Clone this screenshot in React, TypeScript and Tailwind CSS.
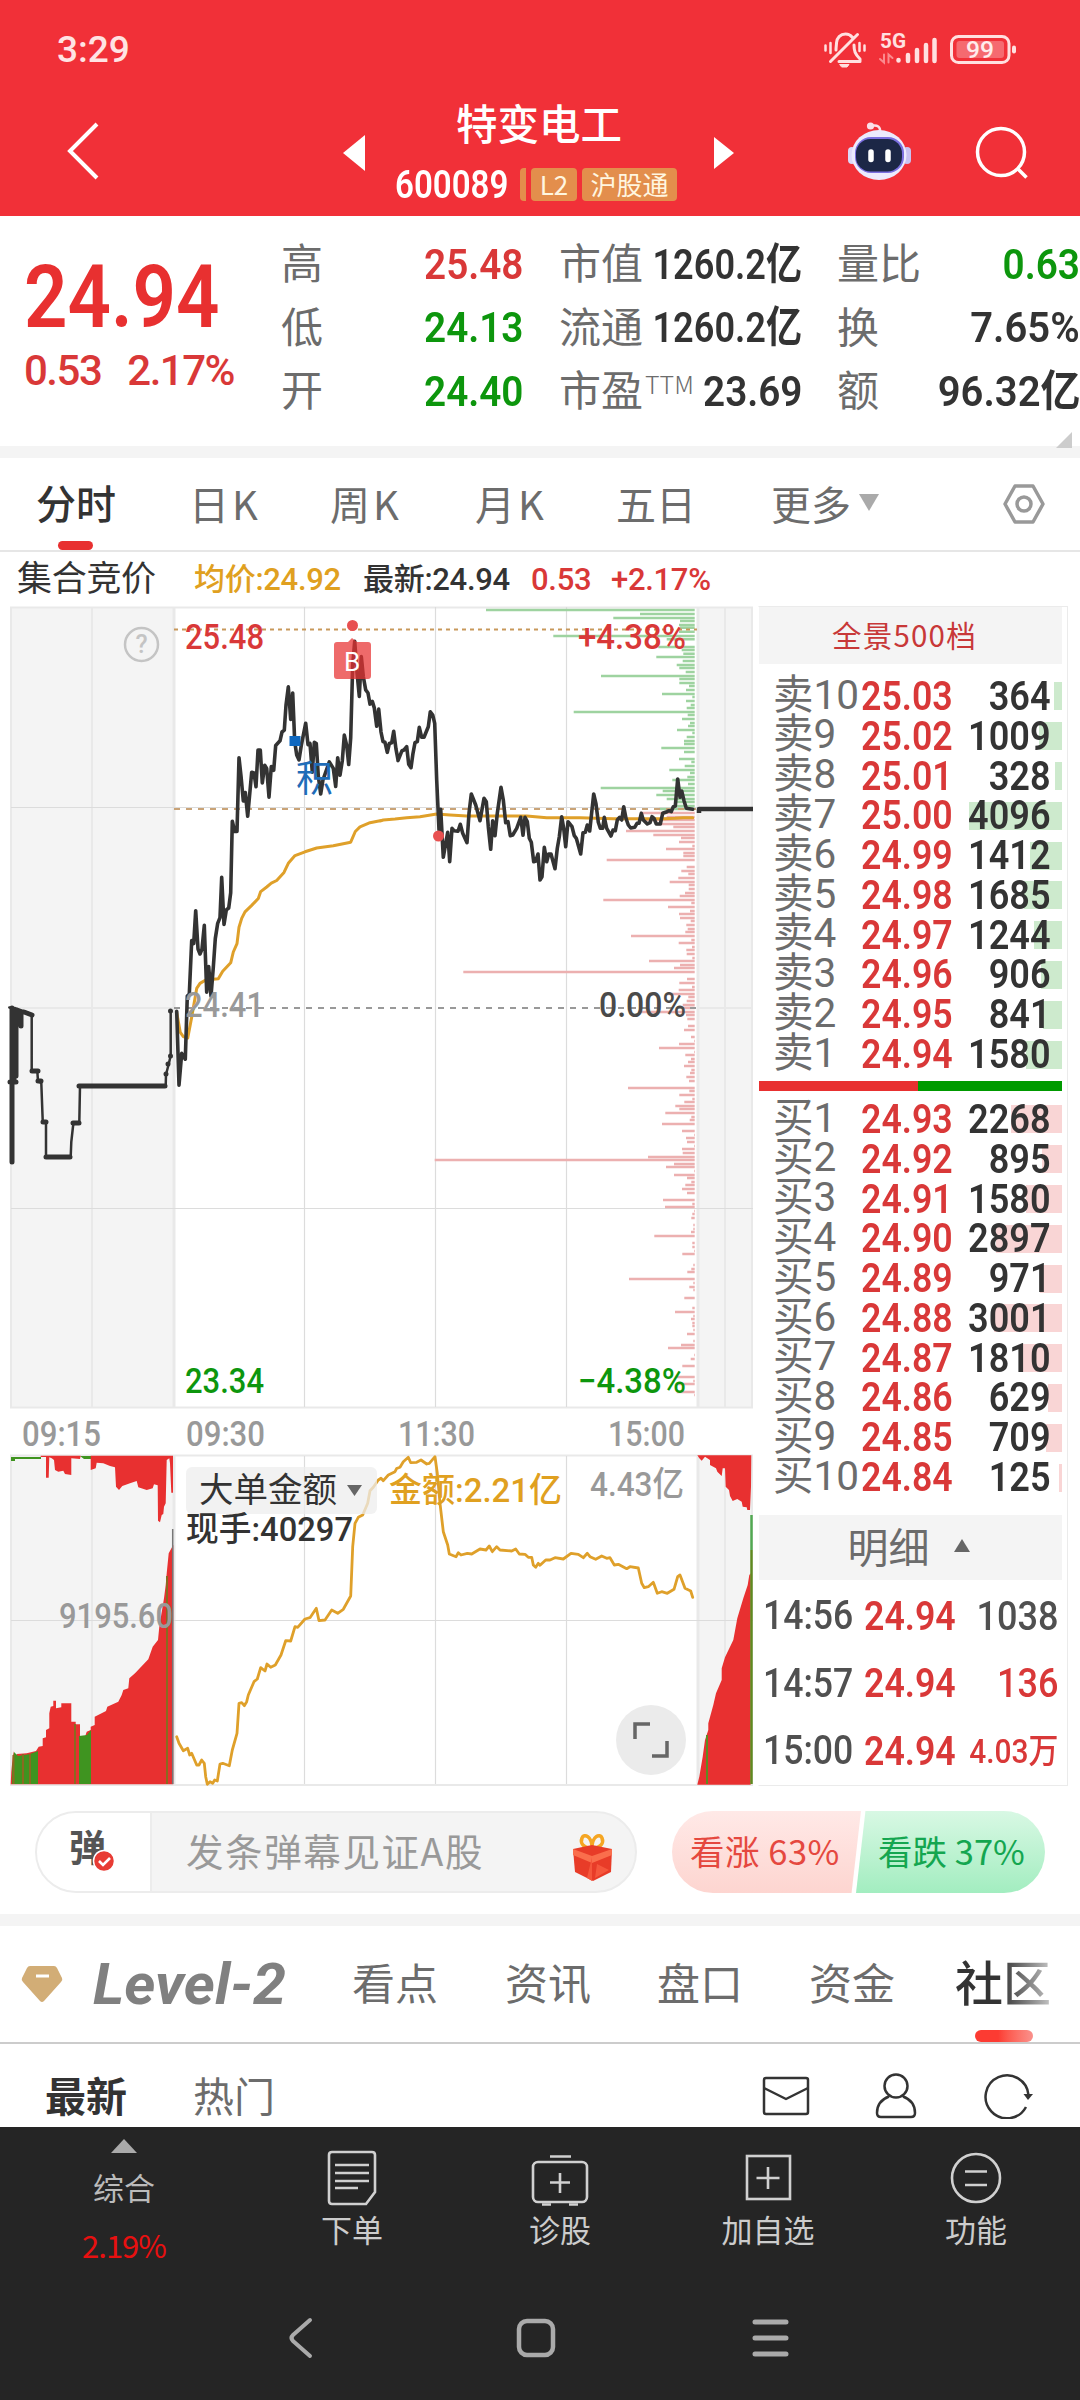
import type { ReactNode } from 'react'

type Point = [number, number]

const NUM = "font-['Roboto','Noto_Sans_CJK_SC',sans-serif]"

// sampled traces, mapped to chart space by `trace`
function trace(points: Point[], x0: number, y0: number, sx: number, sy: number) {
  return points.map(([x, y]) => `${(x0 + x * sx).toFixed(1)},${(y0 + y * sy).toFixed(1)}`).join(' ')
}

const T = 1 / 3
const V = 600 / 1568

const priceMorning: Point[] = [
  [530, 1075], [537, 1268], [545, 1185], [556, 1200], [562, 1035], [568, 1030], [575, 890], [581, 898], [587, 812],
  [594, 912], [600, 925], [606, 912], [613, 850], [620, 1025], [626, 958], [633, 1035], [640, 960], [646, 885],
  [653, 845], [660, 830], [665, 725], [672, 848], [679, 810], [686, 805], [692, 765], [697, 578], [704, 605],
  [711, 605], [717, 412], [723, 460], [730, 525], [736, 503], [743, 565], [755, 450], [762, 452], [768, 488],
  [774, 392], [781, 392], [787, 478], [794, 432], [800, 440], [807, 515], [814, 435], [821, 445], [827, 380],
  [840, 368], [846, 345], [853, 340], [858, 275], [865, 227], [872, 312], [878, 243], [884, 370], [890, 405],
  [897, 418], [904, 380], [917, 322], [924, 378], [930, 375], [937, 450], [943, 372], [949, 375], [955, 460],
  [962, 507], [969, 470], [988, 423], [1000, 440], [1007, 487], [1013, 412], [1020, 458], [1027, 420], [1033, 353],
  [1040, 380], [1046, 430], [1052, 360], [1058, 170], [1064, 108], [1071, 190], [1078, 252], [1084, 148],
  [1090, 200], [1097, 235], [1104, 243], [1110, 272], [1117, 265], [1123, 282], [1130, 330], [1136, 285],
  [1143, 345], [1149, 370], [1155, 372], [1162, 398], [1168, 375], [1175, 373], [1181, 343], [1188, 390], [1194, 418],
]

const priceAfternoon: Point[] = [
  [54, 482], [66, 452], [72, 450], [80, 440], [86, 493], [93, 503], [99, 460], [105, 428], [112, 425], [118, 382],
  [125, 412], [132, 412], [145, 380], [151, 335], [158, 345], [164, 370], [170, 540], [177, 690], [182, 628],
  [190, 772], [203, 697], [209, 785], [216, 685], [222, 692], [234, 694], [241, 673], [248, 700], [261, 728],
  [267, 640], [274, 582], [287, 615], [300, 662], [312, 595], [319, 605], [325, 680], [332, 748], [338, 662],
  [345, 707], [352, 640], [363, 562], [370, 600], [377, 668], [384, 665], [391, 707], [398, 705], [410, 685],
  [422, 652], [429, 706], [435, 652], [442, 665], [448, 715], [454, 727], [461, 785], [467, 783], [474, 762],
  [480, 840], [486, 830], [493, 742], [500, 785], [506, 762], [513, 762], [525, 806], [532, 745], [538, 710],
  [545, 650], [551, 685], [557, 740], [564, 665], [576, 680], [583, 707], [589, 715], [602, 762], [609, 698],
  [616, 697], [622, 675], [629, 693], [641, 582], [648, 612], [655, 667], [661, 685], [668, 685], [673, 652],
  [680, 685], [693, 708], [699, 690], [706, 692], [712, 660], [719, 652], [725, 660], [731, 620], [738, 655],
  [745, 675], [752, 684], [764, 682], [771, 670], [777, 670], [784, 640], [790, 660], [802, 672], [810, 668],
  [816, 650], [822, 655], [829, 672], [841, 672], [848, 640], [861, 635], [867, 632], [874, 635], [880, 620],
  [886, 618], [893, 537], [900, 592], [905, 573], [912, 602], [919, 625], [938, 628],
]

const averageMorning: Point[] = [
  [530, 1078], [541, 1130], [550, 1141], [563, 1145], [575, 1090], [590, 1015], [600, 1002], [617, 993], [655, 990],
  [668, 970], [692, 948], [700, 920], [711, 898], [717, 855], [725, 832], [735, 815], [755, 798], [775, 780],
  [782, 762], [800, 750], [814, 740], [830, 733], [852, 712], [865, 688], [885, 668], [915, 658], [950, 648],
  [1000, 642], [1052, 633], [1066, 605], [1080, 593], [1110, 582], [1140, 577],
]

const averageAfternoon: Point[] = [
  [0, 663], [10, 660], [45, 657], [80, 653], [120, 650], [170, 642], [210, 645], [260, 648], [440, 648], [500, 653],
  [600, 653], [700, 656], [850, 656], [885, 655], [910, 653], [938, 653],
]

const auctionPrice: Point[] = [
  [28, 1065], [50, 1068], [75, 1076], [95, 1083], [95, 1230], [112, 1230], [114, 1258], [124, 1262], [128, 1360],
  [138, 1367], [138, 1455], [212, 1455], [214, 1416], [219, 1376], [221, 1366], [238, 1366], [240, 1270],
  [497, 1270], [498, 1240], [507, 1210], [512, 1190], [512, 1073],
]

const amountMorning: Point[] = [
  [530, 1070], [537, 1090], [550, 1112], [563, 1105], [569, 1125], [575, 1120], [590, 1155], [597, 1155],
  [605, 1140], [613, 1150], [617, 1190], [622, 1213], [630, 1205], [638, 1210], [644, 1200], [652, 1203],
  [660, 1152], [668, 1150], [688, 1157], [697, 1110], [711, 1060], [717, 970], [725, 968], [733, 977], [740, 965],
  [745, 945], [762, 905], [772, 897], [782, 863], [795, 873], [801, 852], [812, 862], [826, 855], [843, 825],
  [857, 782], [872, 783], [885, 740], [893, 742], [915, 717], [930, 713], [949, 685], [957, 722], [975, 720],
  [995, 690], [1013, 700], [1030, 688], [1052, 648], [1058, 500], [1065, 430], [1075, 412], [1088, 405],
  [1103, 370], [1110, 332], [1120, 322], [1135, 300], [1143, 295], [1150, 302], [1165, 285], [1185, 275], [1190, 265],
]

const amountAfternoon: Point[] = [
  [52, 145], [60, 142], [70, 125], [85, 112], [92, 128], [110, 127], [123, 120], [140, 132], [148, 130], [165, 110],
  [172, 160], [180, 250], [190, 335], [203, 375], [208, 402], [228, 410], [235, 398], [243, 405], [262, 400],
  [275, 402], [300, 387], [318, 390], [328, 378], [337, 395], [350, 380], [360, 390], [395, 393], [407, 387],
  [418, 402], [435, 403], [445, 412], [455, 412], [460, 435], [467, 442], [475, 430], [480, 436], [497, 420],
  [510, 420], [525, 413], [550, 417], [573, 400], [595, 403], [610, 413], [622, 400], [630, 410], [647, 418],
  [665, 408], [680, 415], [690, 413], [703, 435], [715, 433], [740, 446], [750, 440], [775, 444], [785, 490],
  [793, 503], [805, 500], [820, 487], [832, 520], [845, 515], [862, 520], [882, 508], [893, 470], [900, 465],
  [915, 505], [932, 513], [938, 532],
]

// [offset from chart top, bar start], bars grow leftwards from the 15:00 edge
const askDepth: Point[] = [
  [30, 318], [42, 780], [54, 700], [63, 900], [75, 897], [83, 900], [95, 897], [108, 520], [118, 860], [141, 835],
  [150, 905], [161, 910], [171, 829], [183, 908], [195, 890], [204, 898], [216, 917], [228, 663], [237, 898],
  [249, 898], [258, 927], [270, 918], [282, 846], [291, 937], [303, 918], [315, 932], [324, 920], [336, 581],
  [345, 923], [357, 906], [369, 930], [378, 924], [390, 891], [399, 937], [411, 920], [423, 912], [432, 912],
  [444, 844], [456, 912], [477, 897], [486, 934], [498, 914], [510, 868], [519, 930], [531, 922], [540, 877],
  [552, 924], [564, 662], [573, 848], [585, 829], [597, 860], [606, 890], [618, 880], [627, 838],
]

const bidDepth: Point[] = [
  [639, 780], [651, 860], [660, 790], [672, 830], [681, 880], [693, 738], [705, 820], [714, 903], [726, 897],
  [738, 937], [747, 858], [759, 910], [768, 910], [780, 680], [801, 920], [813, 904], [822, 925], [834, 895],
  [846, 869], [855, 926], [867, 926], [879, 915], [888, 899], [900, 670], [909, 934], [921, 864], [933, 930],
  [942, 897], [954, 900], [963, 932], [975, 919], [987, 923], [996, 916], [1008, 753], [1020, 934], [1029, 896],
  [1041, 936], [1050, 919], [1062, 920], [1074, 937], [1083, 807], [1095, 900], [1104, 882], [1116, 250],
  [1137, 921], [1149, 898], [1161, 936], [1170, 896], [1182, 860], [1191, 925], [1203, 920], [1215, 908],
  [1224, 905], [1236, 775], [1245, 918], [1257, 922], [1278, 924], [1290, 912], [1311, 933], [1323, 942],
  [1332, 897], [1344, 837], [1356, 942], [1365, 916], [1377, 933], [1386, 924], [1398, 912], [1410, 934],
  [1419, 930], [1431, 919], [1443, 927], [1464, 744], [1473, 928], [1485, 898], [1497, 937], [1506, 913],
  [1518, 886], [1527, 898], [1539, 856], [1551, 934], [1560, 929], [1572, 846], [1593, 906], [1605, 942],
  [1614, 918], [1626, 921], [1638, 942], [1647, 906], [1659, 908], [1671, 804], [1680, 164], [1692, 882],
  [1701, 858], [1713, 942], [1725, 882], [1734, 921], [1746, 934], [1755, 916], [1767, 906], [1779, 921],
  [1800, 849], [1812, 937], [1821, 855], [1833, 942], [1842, 937], [1854, 934], [1875, 940], [1887, 940],
  [1896, 933], [1908, 823], [1929, 937], [1941, 937], [1953, 942], [1962, 907], [1995, 940], [2007, 934],
  [2016, 922], [2037, 747], [2049, 940], [2061, 928], [2070, 940], [2094, 913], [2124, 937], [2136, 885],
  [2148, 940], [2157, 933], [2169, 937], [2178, 937], [2190, 940], [2202, 921], [2223, 940], [2235, 903],
  [2244, 864], [2265, 942], [2277, 932], [2298, 907], [2331, 890], [2343, 940], [2352, 890], [2376, 890], [2385, 942],
]

const openVolume: Point[] = [
  [32, 1213], [34, 1175], [40, 1113], [44, 1150], [50, 1122], [80, 1120], [108, 1113], [116, 1100], [128, 1098],
  [128, 1075], [138, 1072], [138, 1050], [148, 1045], [148, 1000], [152, 980], [160, 978], [160, 962], [168, 962],
  [168, 985], [184, 982], [184, 970], [214, 970], [214, 1025], [227, 1025], [227, 1033], [240, 1033], [240, 1070],
  [256, 1068], [260, 1055], [272, 1050], [272, 1040], [284, 1035], [284, 1010], [318, 993], [322, 980], [355, 965],
  [365, 945], [370, 930], [385, 925], [388, 895], [405, 880], [445, 838], [458, 800], [474, 780], [478, 740],
  [492, 655], [497, 615], [500, 580], [506, 520], [515, 503], [520, 495], [520, 1213],
]

const openUnmatched: Point[] = [
  [122, 227], [122, 231], [138, 231], [138, 293], [146, 293], [148, 232], [155, 235], [162, 240], [165, 270],
  [175, 275], [190, 272], [195, 282], [214, 285], [214, 235], [240, 237], [242, 227], [272, 227], [272, 270],
  [287, 265], [290, 248], [310, 250], [330, 258], [345, 262], [348, 320], [357, 330], [367, 318], [390, 310],
  [410, 303], [415, 322], [440, 330], [458, 325], [462, 313], [473, 316], [474, 422], [480, 427], [485, 405],
  [490, 402], [492, 380], [497, 370], [500, 240], [508, 235], [510, 250], [514, 338], [519, 338], [519, 227],
]

const closeVolume: Point[] = [
  [952, 1094], [958, 1070], [968, 1010], [975, 960], [985, 930], [985, 910], [1000, 855], [1008, 820], [1025, 780],
  [1025, 745], [1035, 712], [1060, 660], [1072, 595], [1090, 535], [1103, 495], [1108, 465], [1112, 460], [1112, 1094],
]

const closeUnmatched: Point[] = [
  [952, 106], [958, 115], [965, 122], [975, 110], [990, 120], [990, 135], [1008, 145], [1012, 155], [1025, 168],
  [1028, 145], [1035, 145], [1037, 200], [1047, 210], [1050, 228], [1058, 243], [1072, 237], [1085, 245],
  [1088, 260], [1100, 262], [1102, 270], [1110, 270], [1113, 200], [1114, 106],
]

const asks: [string, string, number][] = [
  ['卖10', '25.03', 364],
  ['卖9', '25.02', 1009],
  ['卖8', '25.01', 328],
  ['卖7', '25.00', 4096],
  ['卖6', '24.99', 1412],
  ['卖5', '24.98', 1685],
  ['卖4', '24.97', 1244],
  ['卖3', '24.96', 906],
  ['卖2', '24.95', 841],
  ['卖1', '24.94', 1580],
]

const bids: [string, string, number][] = [
  ['买1', '24.93', 2268],
  ['买2', '24.92', 895],
  ['买3', '24.91', 1580],
  ['买4', '24.90', 2897],
  ['买5', '24.89', 971],
  ['买6', '24.88', 3001],
  ['买7', '24.87', 1810],
  ['买8', '24.86', 629],
  ['买9', '24.85', 709],
  ['买10', '24.84', 125],
]

function StatusBar() {
  return (
    <div className="flex h-[100px] items-center pl-[57px] pr-[62px]">
      <span className={`${NUM} flex-1 text-[37px] font-medium text-[#ffe3e3]`}>3:29</span>
      <svg width="196" height="40" viewBox="822 30 196 40" fill="none" stroke="#ffe0e0" strokeWidth="3" strokeLinecap="round">
        <path d="M836 50c0-3 .500-5 .500-7 0-5 4-9 9-9 3 0 5 1 6.500 3M854 45c0 6 1 9 6 14v2.500h-21M830.500 61.500l27-27" strokeLinejoin="round" />
        <path d="M825.500 45.500v5M830.500 43v10M859.500 43v8M864.500 45.500v5" strokeWidth="2.500" />
        <path d="M840 64.500h9l-2 2.500h-5z" fill="#ffe0e0" strokeWidth="1" />
        <g strokeWidth="4.500">
          <path d="M898.500 60v.500M908 55v6M917 50v11M926 45v16M934.500 40v21" />
        </g>
        <path d="M884 54.500v8l-4-3.500M888.500 62.500v-8l4 3.500" stroke="#fb8a8e" strokeWidth="2" />
        <rect x="951.500" y="36.500" width="57.500" height="26" rx="7" />
        <rect x="956.500" y="41" width="47.500" height="17" rx="3" fill="#f56a70" stroke="none" />
        <path d="M1014 47.500v4" strokeWidth="4" />
        <text x="880" y="48" fontSize="20" fontWeight="700" fill="#ffe0e0" stroke="none" textLength="26" lengthAdjust="spacingAndGlyphs" className={NUM}>5G</text>
        <text x="966" y="58" fontSize="23" fontWeight="500" fill="#ffecec" stroke="none" textLength="28" lengthAdjust="spacingAndGlyphs" className={NUM}>99</text>
      </svg>
    </div>
  )
}

function Robot() {
  return (
    <svg width="64" height="64" viewBox="0 0 64 64" className="ml-[113px] shrink-0">
      <path d="M24 5q10-2 9 6" fill="none" stroke="#fbdfe8" strokeWidth="2.500" />
      <circle cx="23.500" cy="5" r="3.600" fill="#fbdfe8" />
      <rect x="1" y="26" width="8" height="17" rx="4" fill="#dcd8f8" />
      <rect x="56" y="26" width="8" height="17" rx="4" fill="#c9c2f2" />
      <ellipse cx="32" cy="34" rx="27.500" ry="25" fill="#eceafd" />
      <rect x="8" y="16" width="49" height="36" rx="16" fill="#7b6fe0" />
      <rect x="9" y="18" width="46" height="32.500" rx="14.500" fill="#1c2746" />
      <path d="M24 31v7.500M41 31v7.500" stroke="#fff" strokeWidth="5.500" strokeLinecap="round" />
    </svg>
  )
}

function TitleBar() {
  return (
    <div className="flex h-[116px]">
      <div className="w-[343px] pl-[66px] pt-[22px]">
        <svg width="34" height="58" viewBox="0 0 34 58" fill="none" stroke="#fff" strokeWidth="4">
          <path d="M31 2 4 29l27 27" />
        </svg>
      </div>
      <div className="flex h-[106px] items-center">
        <svg width="22" height="36" viewBox="0 0 22 36" fill="#fff"><path d="M22 0v36L0 18z" /></svg>
      </div>
      <div className="flex w-[349px] flex-col items-center text-white">
        <div className="h-[46px] pr-px text-[41.500px] font-medium leading-[45px]">特变电工</div>
        <div className="mt-[21px] flex h-[34px] items-center gap-[5px] pr-[7px]">
          <span className={`${NUM} mr-[7px] w-[113px] pt-[3px] text-[38px] font-semibold`}>
            <span className="inline-block origin-left scale-x-[0.870]">600089</span>
          </span>
          <span className="h-[33px] w-[6px] rounded-l-sm bg-[#e38e4c]" />
          <span className="h-[33px] w-[46px] rounded-sm bg-[#e38e4c] text-center text-[26px] leading-[32px] text-[#fff6e0]">L2</span>
          <span className="h-[33px] w-[95px] rounded-sm bg-[#e38e4c] text-center text-[26px] leading-[32px] text-[#fff6e0]">沪股通</span>
        </div>
      </div>
      <div className="flex h-[106px] items-center">
        <svg width="20" height="32" viewBox="0 0 20 32" fill="#fff"><path d="M0 0v32l20-16z" /></svg>
      </div>
      <div className="flex h-[106px] items-center">
        <Robot />
        <svg width="56" height="56" viewBox="0 0 56 56" fill="none" stroke="#fff" strokeWidth="3.500" className="ml-[63px]">
          <circle cx="27" cy="27" r="23.500" />
          <path d="m43.500 43.500 9 9" />
        </svg>
      </div>
    </div>
  )
}

type QuoteItemProps = { label: string; sup?: string; value: string; color: string; fit?: string }

function QuoteItem({ label, sup, value, color, fit = 'scale-x-[0.900]' }: QuoteItemProps) {
  return (
    <div className="flex h-[63.500px] items-center justify-between whitespace-nowrap">
      <span className="flex items-center pb-[7px] text-[42px] leading-none text-[#6c6c6c]">
        {label}
        {sup ? <span className="pb-[10px] pl-[2px] text-[25px] font-light">{sup}</span> : null}
      </span>
      <span className={`${NUM} ml-[-40px] inline-block origin-right pb-[2px] text-[43px] font-semibold ${fit} ${color}`}>{value}</span>
    </div>
  )
}

function Quote() {
  return (
    <section className="flex h-[230px] bg-white pt-[17px]">
      <div className="w-[281px] pl-6">
        <div className={`${NUM} mt-[12px] origin-left scale-x-[0.865] text-[88px] font-semibold leading-[104px] text-[#e83030]`}>24.94</div>
        <div className={`${NUM} mt-[-2px] flex gap-[26px] text-[42px] font-medium leading-[48px] tracking-[-1.500px] text-[#d93838]`}>
          <span>0.53</span>
          <span>2.17%</span>
        </div>
      </div>
      <div className="w-[242px]">
        <QuoteItem label="高" value="25.48" color="text-[#d93838]" />
        <QuoteItem label="低" value="24.13" color="text-[#0d960d]" />
        <QuoteItem label="开" value="24.40" color="text-[#0d960d]" />
      </div>
      <div className="ml-[36px] w-[243px]">
        <QuoteItem label="市值" value="1260.2亿" color="text-[#333]" fit="scale-x-[0.840]" />
        <QuoteItem label="流通" value="1260.2亿" color="text-[#333]" fit="scale-x-[0.840]" />
        <QuoteItem label="市盈" sup="TTM" value="23.69" color="text-[#333]" />
      </div>
      <div className="ml-[35px] w-[243px]">
        <QuoteItem label="量比" value="0.63" color="text-[#0d960d]" />
        <QuoteItem label="换" value="7.65%" color="text-[#333]" fit="scale-x-[0.930]" />
        <QuoteItem label="额" value="96.32亿" color="text-[#333]" fit="scale-x-[0.930]" />
        <svg width="16" height="16" className="ml-[219px] mt-[8px]" fill="#ccc"><path d="M16 0v16H0z" /></svg>
      </div>
    </section>
  )
}

function PeriodTabs() {
  return (
    <nav className="flex h-[94px] items-center border-b-2 border-[#e6e6e6] pl-[36px] text-[40px] text-[#6c6c6c]">
      <div className="flex h-full w-[153px] flex-col justify-end">
        <span className="font-medium leading-[60px] text-[#333]">分时</span>
        <span className="ml-[22px] mt-[9px] h-[9px] w-[35px] rounded-full bg-[#e83030]" />
      </div>
      <span className="w-[141px] pb-[3px] tracking-[3px]">日K</span>
      <span className="w-[145px] pb-[3px] tracking-[3px]">周K</span>
      <span className="w-[141px] pb-[3px] tracking-[3px]">月K</span>
      <span className="w-[155px] pb-[3px]">五日</span>
      <span className="flex w-[232px] items-center gap-[8px] pb-[3px]">
        更多
        <svg width="20" height="17" viewBox="0 0 20 17" fill="#aaa"><path d="M0 0h20L10 17z" /></svg>
      </span>
      <svg width="42" height="42" viewBox="0 0 42 42" fill="none" stroke="#999" strokeWidth="3.500" strokeLinejoin="round">
        <path d="M12 3h18l10 18-10 18H12L2 21z" />
        <circle cx="21" cy="21" r="7" />
      </svg>
    </nav>
  )
}

function InfoLine() {
  return (
    <div className={`${NUM} flex h-[54px] items-center pt-[3px] text-[31px] font-medium tracking-[-0.3px] text-[#333]`}>
      <span className="w-[176px] pl-[17px] text-[35px] font-normal">集合竞价</span>
      <span className="w-[169px] pl-[18px] text-[#e0a020]">均价:24.92</span>
      <span className="w-[169px] pl-[18px]">最新:24.94</span>
      <span className="w-[80px] pl-[17px] text-[#d93838]">0.53</span>
      <span className="pl-[17px] text-[#d93838]">+2.17%</span>
    </div>
  )
}

function Tag({ x, y, w, size = 35, fill, weight = 500, children }: { x: number; y: number; w: number; size?: number; fill: string; weight?: number; children: ReactNode }) {
  return (
    <text x={x} y={y} fontSize={size} fontWeight={weight} fill={fill} textLength={w} lengthAdjust="spacingAndGlyphs" className={NUM}>
      {children}
    </text>
  )
}

function DepthBars({ bars, stroke }: { bars: Point[]; stroke: string }) {
  const d = bars.map(([y, x]) => `M${(380 + x * T).toFixed(1)} ${(600 + y * T).toFixed(1)}H694.7`).join('')
  return <path d={d} stroke={stroke} strokeWidth="2.600" fill="none" />
}

function Chart() {
  return (
    <svg width="758" height="1180" viewBox="0 606 758 1180" className="shrink-0" fill="none">
      <path d="M11 608h164v800H11zM697 608h56v800h-56zM11 1456h164v328H11zM697 1456h56v328h-56z" fill="#f4f4f4" />
      <g stroke="#e9e9e9" strokeWidth="2">
        <path d="M10 607.500H753M10 1407.500H753M10 1455.500H753M10 1785H753" />
        <path d="M11 607v800M92 607v800M725 607v800M752 607v800M11 1456v328M92 1456v328M725 1456v328M752 1456v328" />
        <path d="M174 607v800M698 607v800M174 1456v328M698 1456v328" strokeWidth="3" />
        <path d="M11 1008h163M698 1008h55" />
      </g>
      <g stroke="#dcdcdc" strokeWidth="1.200">
        <path d="M11 807.500H753M11 1208.500H753M11 1620.500H753" />
        <path d="M304.500 607v800M435.500 607v800M566.500 607v800M304.500 1456v328M435.500 1456v328M566.500 1456v328" />
      </g>

      <DepthBars bars={askDepth} stroke="#9ed3a0" />
      <DepthBars bars={bidDepth} stroke="#ecb0b0" />

      <path d="M174 629.500H697" stroke="#c8985a" strokeWidth="2" strokeDasharray="4 4" />
      <path d="M174 809H697" stroke="#c9a377" strokeWidth="2" strokeDasharray="6 6" />
      <path d="M174 1008H697" stroke="#999" strokeWidth="2" strokeDasharray="6 6" />

      <g strokeLinejoin="round" strokeLinecap="round">
        <polyline points={`${trace(averageMorning, 0, 600, T, V)} ${trace(averageAfternoon, 380, 600, T, T)}`} stroke="#dfa02a" strokeWidth="3" />
        <polyline points={`${trace(priceMorning, 0, 600, T, V)} ${trace(priceAfternoon, 380, 600, T, T)}`} stroke="#333" strokeWidth="3.600" />
        <polyline points={trace(auctionPrice, 0, 600, T, V)} stroke="#333" strokeWidth="2.500" />
        <path d="M12 1008v154M14 1009v72M16 1010v66M20 1012v7M21 1013v13M10 1082h6M24 1012l8 3M79 1086h86M46 1157h24M32 1071h6M38 1081h3M43 1122h3M73 1123h6M170.500 1011v.1M170.500 1056v.1M168 1064v.1M166 1074v.1" stroke="#333" strokeWidth="5" />
        <path d="M699 813v-4h54" stroke="#333" strokeWidth="4.500" strokeLinecap="butt" />
      </g>

      <circle cx="141.500" cy="644.500" r="16.500" stroke="#c4c4c4" strokeWidth="2.500" />
      <text x="141.500" y="653" textAnchor="middle" fontSize="25" fontWeight="500" fill="#c4c4c4" className={NUM}>?</text>

      <path d="M352 638l5 4h11q3 0 3 3v31q0 3-3 3h-31q-3 0-3-3v-31q0-3 3-3h11z" fill="#e83030" fillOpacity="0.720" />
      <text x="352" y="671" textAnchor="middle" fontSize="26" fill="#fff" className={NUM}>B</text>
      <circle cx="352.500" cy="625.500" r="5.500" fill="#e85050" />
      <circle cx="438.500" cy="836" r="5.500" fill="#e85050" />
      <path d="M289.500 736h11v10h-11z" fill="#0f68c0" />
      <text x="296" y="792" fontSize="37" fill="#1f6cb8" className={NUM}>积</text>

      <Tag x={185} y={649} w={79} fill="#d93838">25.48</Tag>
      <Tag x={185} y={1017} w={79} fill="#999">24.41</Tag>
      <Tag x={185} y={1393} w={79} fill="#0d960d">23.34</Tag>
      <Tag x={578} y={649} w={108} fill="#d93838">+4.38%</Tag>
      <Tag x={599} y={1017} w={87} fill="#4a4a4a">0.00%</Tag>
      <Tag x={578} y={1393} w={108} fill="#0d960d">−4.38%</Tag>
      <Tag x={22} y={1446} w={79} fill="#999">09:15</Tag>
      <Tag x={186} y={1446} w={79} fill="#999">09:30</Tag>
      <Tag x={398} y={1446} w={77} fill="#999">11:30</Tag>
      <Tag x={608} y={1446} w={77} fill="#999">15:00</Tag>

      <polygon points={trace(openVolume, 0, 1380, T, T)} fill="#e83030" />
      <path d="M12 1784v-14l2-18 4 4 12-2 8-3v33zM79 1784v-48l8-1 4-5v54z" fill="#3f9420" />
      <path d="M13.500 1755v29M23 1754v30M30 1754v30M75 1724v60M167 1576v208" stroke="#8a6a20" strokeWidth="2" />
      <path d="M11 1457h30v2h-26v2h-4zM80 1456h12v3h-8z" fill="#3f9420" />
      <path d="M172.700 1529v255" stroke="#777" strokeWidth="1.500" />
      <polygon points={trace(openUnmatched, 0, 1380, T, T)} fill="#e83030" />
      <polygon points={trace(closeVolume, 380, 1420, T, T)} fill="#e83030" />
      <polygon points={trace(closeUnmatched, 380, 1420, T, T)} fill="#e83030" />
      <path d="M751.500 1515v35" stroke="#52a852" strokeWidth="2.500" />
      <path d="M751.500 1550v234" stroke="#5f8a20" strokeWidth="2.500" />
      <path d="M707 1735v49" stroke="#5f8a20" strokeWidth="2" />

      <polyline
        points={`${trace(amountMorning, 0, 1380, T, T)} ${trace(amountAfternoon, 380, 1420, T, T)}`}
        stroke="#dfa02a"
        strokeWidth="2.800"
        strokeLinejoin="round"
        strokeLinecap="round"
      />
      <Tag x={59} y={1628} w={114} fill="#999">9195.60</Tag>
      <rect x="186" y="1467" width="191" height="47" rx="6" fill="#eee" fillOpacity="0.750" />
      <Tag x={199} y={1502} w={138} size={34} weight={400} fill="#333">大单金额</Tag>
      <path d="M347 1485h15l-7.500 11z" fill="#666" />
      <Tag x={186} y={1541} w={167} size={34} fill="#333">现手:40297</Tag>
      <Tag x={389} y={1502} w={173} size={34} fill="#e0a020">金额:2.21亿</Tag>
      <Tag x={590} y={1496} w={94} size={34} fill="#999">4.43亿</Tag>
      <circle cx="651" cy="1740" r="35" fill="#ebebeb" />
      <path d="M635 1739v-15h15M652 1756h15v-15" stroke="#666" strokeWidth="3.500" />
    </svg>
  )
}

function BookRow({ row, tint }: { row: [string, string, number]; tint: string }) {
  const [label, price, volume] = row
  return (
    <div className={`${NUM} relative flex h-[39.800px] items-center pt-px text-[41px] leading-none`}>
      <span className={`absolute right-0 h-[28px] ${tint}`} style={{ width: (volume * 93) / 4096 }} />
      <span className="relative w-[102px] whitespace-nowrap pb-[3px] pl-[14px] text-[40.500px] text-[#6c6c6c]">{label}</span>
      <span className="relative w-[90px] origin-left scale-x-[0.870] font-semibold text-[#d93838]">{price}</span>
      <span className="relative flex-1 origin-right scale-x-[0.880] pr-[13px] text-right font-semibold text-[#333]">{volume}</span>
    </div>
  )
}

function Trade({ time, volume, volumeClass }: { time: string; volume: string; volumeClass: string }) {
  return (
    <div className={`${NUM} flex h-[67.500px] items-center pt-px text-[41px] font-medium leading-none`}>
      <span className="w-[101px] origin-left scale-x-[0.890] text-[40px] text-[#505050]">{time}</span>
      <span className="w-[94px] origin-left scale-x-[0.870] font-semibold text-[#d93838]">24.94</span>
      <span className={`flex-1 origin-right scale-x-[0.880] whitespace-nowrap pr-[4px] text-right ${volumeClass}`}>{volume}</span>
    </div>
  )
}

function OrderBook() {
  return (
    <aside className="flex w-[310px] flex-col border border-[#ebebeb] border-l-transparent pr-[5px]">
      <div className="h-[57px] bg-[#f4f4f4] pr-[12px] text-center text-[29.500px] leading-[55px] tracking-[1.200px] text-[#c83838]">全景500档</div>
      <div className="mt-[12px] flex h-[399px] flex-col">
        {asks.map((row) => <BookRow key={row[0]} row={row} tint="bg-[#cdeacd]" />)}
      </div>
      <div className="mt-[6px] flex h-[10px]">
        <div className="w-[159px] bg-[#e83030]" />
        <div className="flex-1 bg-[#009a00]" />
      </div>
      <div className="mt-[8px] flex h-[398px] flex-col">
        {bids.map((row) => <BookRow key={row[0]} row={row} tint="bg-[#f9d5d5]" />)}
      </div>
      <div className="mb-[2px] mt-[18px] flex h-[65px] items-center justify-center gap-[24px] bg-[#f4f4f4] pb-[4px] pr-[4px] text-[41px] text-[#6c6c6c]">
        明细
        <svg width="16" height="13" fill="#666"><path d="M8 0l8 13H0z" /></svg>
      </div>
      <div className="pl-[4px]">
        <Trade time="14:56" volume="1038" volumeClass="text-[#505050]" />
        <Trade time="14:57" volume="136" volumeClass="text-[#d93838]" />
        <Trade time="15:00" volume="4.03万" volumeClass="ml-[-20px] text-[34px] text-[#d93838]" />
      </div>
    </aside>
  )
}

function Danmaku() {
  return (
    <section className="flex h-[128px] items-start pl-[35px] pt-[25px]">
      <div className="flex h-[82px] w-[602px] items-center overflow-hidden rounded-full border-2 border-[#ececec] bg-[#f4f4f4]">
        <div className="flex h-full w-[115px] items-center border-r-2 border-[#ececec] bg-white pl-[32px]">
          <svg width="46" height="48" viewBox="0 0 46 48">
            <text x="0" y="34" fontSize="37" fontWeight="700" fill="#555" className={NUM}>弹</text>
            <circle cx="35" cy="33" r="10.500" fill="#e83c34" stroke="#fff" strokeWidth="1.500" />
            <path d="m30 33 4 4 7-7" fill="none" stroke="#fff" strokeWidth="2.600" />
          </svg>
        </div>
        <span className="flex-1 pb-[4px] pl-[34px] text-[37.500px] tracking-[1.600px] text-[#999]">发条弹幕见证A股</span>
        <svg width="46" height="50" viewBox="0 0 46 50" className="mr-[19px] mt-[12px]">
          <path d="M22 15C13 15 10 10 12 5s10-2 10 10c0-12 8-15 10-10s-1 10-10 10z" fill="none" stroke="#f5a623" strokeWidth="3.500" />
          <path d="M3 16 22 12l20 4-1 23-18 9-18-9z" fill="#e83c28" />
          <path d="m3 16 19 7 20-7v6l-20 8-19-8z" fill="#fa6e4c" />
          <path d="M22 24v24l-5-3zM27 31l12 6-14 8z" fill="#f5573c" />
        </svg>
      </div>
      <div className="ml-[35px] flex">
        <div className="h-[82px] w-[189px] rounded-l-full bg-gradient-to-b from-[#ffe9e7] to-[#fdd5d0] pl-[18px] text-[34.500px] leading-[79px] tracking-[0.500px] text-[#e5483f] [clip-path:polygon(0_0,100%_0,95%_100%,0_100%)]">
          看涨 63%
        </div>
        <div className="ml-[-5px] h-[82px] w-[189px] rounded-r-full bg-gradient-to-b from-[#d8f8e4] to-[#a2edc0] pl-[22px] text-[34.500px] leading-[79px] text-[#14a650] [clip-path:polygon(5%_0,100%_0,100%_100%,0_100%)]">
          看跌 37%
        </div>
      </div>
    </section>
  )
}

function SectionTabs() {
  return (
    <nav className="flex h-[118px] items-center border-b-2 border-[#ccc] pl-[21px] text-[43px] text-[#6c6c6c]">
      <svg width="42" height="38" viewBox="0 0 42 38">
        <path d="M9 1h24q2 0 3 2l5 10q1 2-1 4L23 36q-2 2-4 0L2 17q-2-2-1-4L6 3q1-2 3-2z" fill="#d2ad76" />
        <path d="M15 11h13" stroke="#fff" strokeWidth="3" />
      </svg>
      <svg width="220" height="70" viewBox="0 0 220 70" className="ml-[20px]">
        <text x="10" y="55" fontSize="57" fontWeight="700" fontStyle="italic" fill="#808080" textLength="193" lengthAdjust="spacingAndGlyphs" className={NUM}>Level-2</text>
      </svg>
      <span className="ml-[49px] w-[153px] pb-[5px]">看点</span>
      <span className="w-[152px] pb-[5px]">资讯</span>
      <span className="w-[152px] pb-[5px]">盘口</span>
      <span className="w-[146px] pb-[5px]">资金</span>
      <div className="flex h-full w-[98px] flex-col justify-end">
        <span className="bg-gradient-to-r from-[#333] from-45% to-[#ccc] bg-clip-text text-[48px] font-medium leading-[70px] text-transparent">社区</span>
        <span className="ml-[20px] mt-[15px] h-[12px] w-[58px] rounded-md bg-gradient-to-r from-[#fc3b32] from-40% to-[#f9918c]" />
      </div>
    </nav>
  )
}

function PostFilter() {
  return (
    <div className="flex h-[83px] items-center pl-[45px] pt-5 text-[41px]">
      <span className="w-[148px] pb-[2px] font-bold text-[#333]">最新</span>
      <span className="w-[569px] pb-[2px] text-[#6c6c6c]">热门</span>
      <svg width="48" height="40" viewBox="0 0 48 40" fill="none" stroke="#333" strokeWidth="2.500" strokeLinejoin="round">
        <rect x="2" y="2" width="44" height="36" rx="2" />
        <path d="m2 12 22 11 22-11" />
      </svg>
      <svg width="42" height="46" viewBox="0 0 42 46" fill="none" stroke="#333" strokeWidth="2.500" strokeLinejoin="round" className="ml-[65px]">
        <ellipse cx="21" cy="13" rx="11.500" ry="11.500" />
        <path d="M14 23.500Q2 28 2 40q0 4 4 4h30q4 0 4-4 0-12-12-16.500" />
      </svg>
      <svg width="50" height="46" viewBox="0 0 50 46" fill="none" stroke="#333" strokeWidth="2.500" className="ml-[67px]">
        <path d="M42 34A21.500 21.500 0 1 1 44.500 22" />
        <path d="M39.500 21h9.500l-5 6z" fill="#333" stroke="none" />
      </svg>
    </div>
  )
}

function ToolItem({ icon, label }: { icon: ReactNode; label: string }) {
  return (
    <div className="flex w-[208px] flex-col items-center pt-[21px] text-[31px] text-[#ccc]">
      <svg width="60" height="60" viewBox="0 0 60 60" fill="none" stroke="#d0d0d0" strokeWidth="2.600">{icon}</svg>
      <span className="leading-[42px]">{label}</span>
    </div>
  )
}

function BottomBar() {
  return (
    <footer className="h-[273px] bg-[#252525]">
      <div className="flex h-[170px]">
        <div className="flex w-[248px] flex-col items-center pt-[12px] text-[31px] text-[#bbb]">
          <svg width="26" height="14" fill="#aaa"><path d="M13 0l13 14H0z" /></svg>
          <span className="mt-[12px] leading-[44px]">综合</span>
          <span className="mt-[14px] text-[31px] leading-[44px] tracking-[-1px] text-[#e81010]">2.19%</span>
        </div>
        <ToolItem
          label="下单"
          icon={
            <>
              <path d="M10 4h40q3 0 3 3v37l-9 12H10q-3 0-3-3V7q0-3 3-3z" />
              <path d="M13 17h34M13 25h34M13 33h34M13 40h23" />
            </>
          }
        />
        <ToolItem
          label="诊股"
          icon={
            <>
              <rect x="3" y="14" width="54" height="40" rx="5" />
              <path d="M20 8.500h21M12 56.500h9M39 56.500h9M30 25v20M20 34.500h20" />
            </>
          }
        />
        <ToolItem
          label="加自选"
          icon={
            <>
              <rect x="9" y="8" width="43" height="43" />
              <path d="M30 19v22M18.500 30h23" />
            </>
          }
        />
        <ToolItem
          label="功能"
          icon={
            <>
              <circle cx="30" cy="30" r="24" />
              <path d="M19 23.500h22M19 37h22" />
            </>
          }
        />
      </div>
      <div className="flex items-center pl-[286px] pt-[20px]">
        <svg width="28" height="42" viewBox="0 0 28 42" fill="none" stroke="#aaa" strokeWidth="4" strokeLinecap="round" strokeLinejoin="round">
          <path d="M24 3 7 18q-3 3 0 6l17 15" />
        </svg>
        <svg width="42" height="42" viewBox="0 0 42 42" fill="none" stroke="#aaa" strokeWidth="4.500" className="ml-[201px]">
          <rect x="4" y="4" width="34" height="34" rx="8" />
        </svg>
        <svg width="40" height="42" viewBox="0 0 40 42" stroke="#aaa" strokeWidth="5" strokeLinecap="round" className="ml-[194px]">
          <path d="M4 5h31M4 21h31M4 37h31" />
        </svg>
      </div>
    </footer>
  )
}

export default function App() {
  return (
    <main className="h-[2400px] w-[1080px] overflow-hidden bg-white font-['Noto_Sans_CJK_SC',sans-serif]">
      <header className="bg-[#f13038]">
        <StatusBar />
        <TitleBar />
      </header>
      <Quote />
      <div className="h-3 bg-[#f4f4f4]" />
      <PeriodTabs />
      <InfoLine />
      <section className="flex h-[1180px]">
        <Chart />
        <OrderBook />
      </section>
      <Danmaku />
      <div className="h-3 bg-[#f4f4f4]" />
      <SectionTabs />
      <PostFilter />
      <BottomBar />
    </main>
  )
}
